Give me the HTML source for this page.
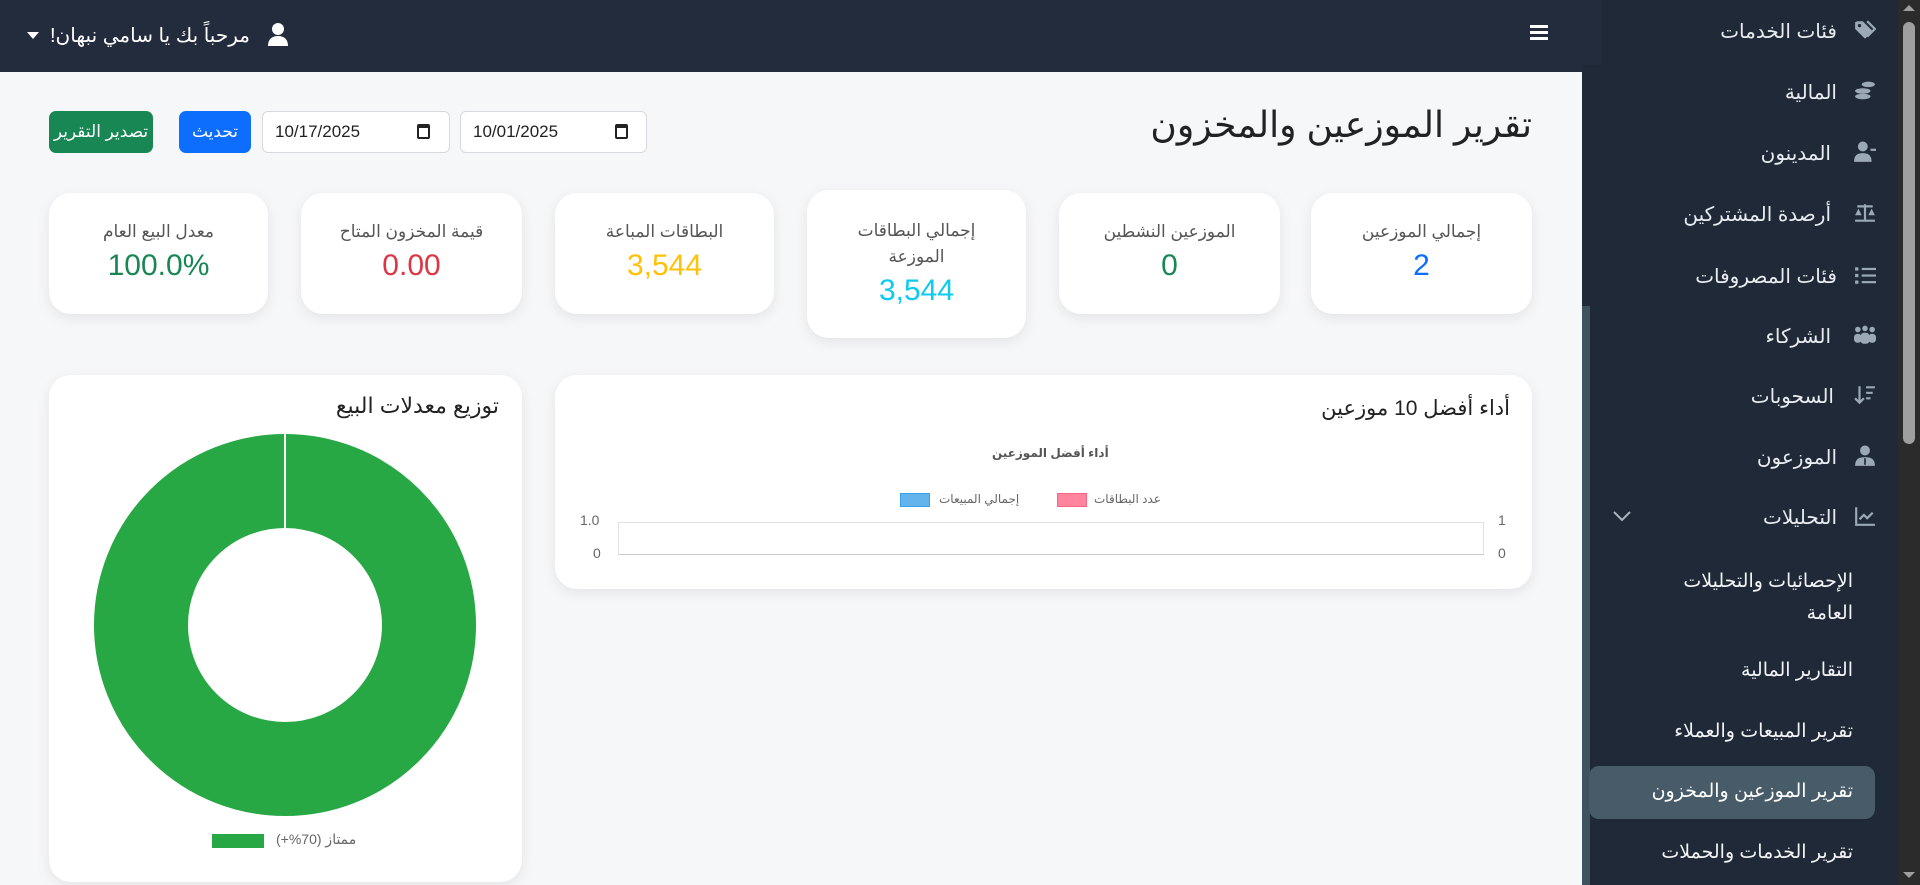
<!DOCTYPE html>
<html><head><meta charset="utf-8"><style>
*{box-sizing:border-box;margin:0;padding:0}
body{width:1920px;height:885px;overflow:hidden;background:#f6f7f9;font-family:"Liberation Sans","DejaVu Sans",sans-serif;position:relative}
.abs{position:absolute}
.hdr{left:0;top:0;width:1582px;height:72px;background:#222c3c}
.side{left:1582px;top:0;width:316px;height:885px;background:#1f2937}
.sb{left:1898px;top:0;width:22px;height:885px;background:#2b2b2b}
.card{position:absolute;background:#fff;border-radius:22px;box-shadow:0 4px 14px rgba(0,0,0,.08)}
.stat{text-align:center;direction:rtl}
.stat .l{color:#555;font-size:17px;line-height:26px}
.stat .v{font-size:30px;margin-top:4px}
.mi{position:absolute;right:83px;color:#e8ecf0;font-size:20px;direction:rtl;white-space:nowrap}
.ic{position:absolute;left:1854px;width:22px;height:22px}
.si{position:absolute;right:67px;color:#f2f4f6;font-size:19px;direction:rtl;text-align:right;white-space:nowrap;line-height:26px}
</style></head><body>
<div class="abs hdr"></div>
<div class="abs" style="left:1530px;top:25px;width:18px;height:3px;background:#fff;box-shadow:0 6px 0 #fff,0 12px 0 #fff"></div>
<div class="abs" style="left:50px;top:23px;color:#fff;font-size:20px;direction:rtl;white-space:nowrap">مرحباً بك يا سامي نبهان!</div>
<svg class="abs" style="left:268px;top:22px" width="20" height="24" viewBox="0 0 20 24"><circle cx="10" cy="7" r="6" fill="#fff"/><path d="M0 24c0-7 4-10 10-10s10 3 10 10z" fill="#fff"/></svg>
<div class="abs" style="left:27px;top:32px;border-left:6px solid transparent;border-right:6px solid transparent;border-top:7px solid #fff"></div>

<div class="abs" style="right:388px;top:104px;font-size:36px;color:#222;direction:rtl;white-space:nowrap">تقرير الموزعين والمخزون</div>

<div class="abs" style="left:49px;top:111px;width:104px;height:42px;background:#198754;border-radius:7px;color:#fff;font-size:17px;text-align:center;line-height:42px">تصدير التقرير</div>
<div class="abs" style="left:179px;top:111px;width:72px;height:42px;background:#0d6efd;border-radius:7px;color:#fff;font-size:17px;text-align:center;line-height:42px">تحديث</div>
<div class="abs" style="left:262px;top:111px;width:188px;height:42px;background:#fff;border:1px solid #d6d9dd;border-radius:6px;font-size:17px;line-height:40px;padding-left:12px;color:#222">10/17/2025</div>
<div class="abs" style="left:417px;top:124px;width:13px;height:15px;border:2px solid #222;border-top-width:4px;border-radius:2px"></div>
<div class="abs" style="left:460px;top:111px;width:187px;height:42px;background:#fff;border:1px solid #d6d9dd;border-radius:6px;font-size:17px;line-height:40px;padding-left:12px;color:#222">10/01/2025</div>
<div class="abs" style="left:615px;top:124px;width:13px;height:15px;border:2px solid #222;border-top-width:4px;border-radius:2px"></div>

<div class="card stat" style="left:49px;top:193px;width:219px;height:121px;padding-top:26px"><div class="l">معدل البيع العام</div><div class="v" style="color:#198754">100.0%</div></div>
<div class="card stat" style="left:301px;top:193px;width:221px;height:121px;padding-top:26px"><div class="l">قيمة المخزون المتاح</div><div class="v" style="color:#dc3545">0.00</div></div>
<div class="card stat" style="left:555px;top:193px;width:219px;height:121px;padding-top:26px"><div class="l">البطاقات المباعة</div><div class="v" style="color:#ffc107">3,544</div></div>
<div class="card stat" style="left:807px;top:190px;width:219px;height:148px;padding-top:28px"><div class="l" style="padding:0 40px">إجمالي البطاقات الموزعة</div><div class="v" style="color:#0dcaf0">3,544</div></div>
<div class="card stat" style="left:1059px;top:193px;width:221px;height:121px;padding-top:26px"><div class="l">الموزعين النشطين</div><div class="v" style="color:#198754">0</div></div>
<div class="card stat" style="left:1311px;top:193px;width:221px;height:121px;padding-top:26px"><div class="l">إجمالي الموزعين</div><div class="v" style="color:#0d6efd">2</div></div>

<div class="card" style="left:49px;top:375px;width:473px;height:507px"></div>
<div class="abs" style="right:1421px;top:393px;font-size:22px;color:#222;direction:rtl;white-space:nowrap">توزيع معدلات البيع</div>
<svg class="abs" style="left:94px;top:434px" width="382" height="382"><circle cx="191" cy="191" r="144" fill="none" stroke="#28a745" stroke-width="94"/><line x1="191" y1="0" x2="191" y2="95" stroke="#fff" stroke-width="2"/></svg>
<div class="abs" style="left:212px;top:834px;width:52px;height:14px;background:#28a745"></div>
<div class="abs" style="left:276px;top:831px;font-size:14px;color:#666;direction:rtl;white-space:nowrap;width:94px;text-align:left">ممتاز (70%+)</div>

<div class="card" style="left:555px;top:375px;width:977px;height:214px"></div>
<div class="abs" style="right:410px;top:396px;font-size:21px;color:#222;direction:rtl;white-space:nowrap">أداء أفضل 10 موزعين</div>
<div class="abs" style="left:992px;top:446px;font-size:12px;color:#555;font-weight:bold;direction:rtl;white-space:nowrap">أداء أفضل الموزعين</div>
<div class="abs" style="left:1057px;top:493px;width:30px;height:14px;background:#ff859f;border:1px solid #ff6384"></div>
<div class="abs" style="left:1094px;top:492px;font-size:12px;color:#666;direction:rtl;white-space:nowrap">عدد البطاقات</div>
<div class="abs" style="left:900px;top:493px;width:30px;height:14px;background:#63b3ed;border:1px solid #36a2eb"></div>
<div class="abs" style="left:939px;top:492px;font-size:12px;color:#666;direction:rtl;white-space:nowrap">إجمالي المبيعات</div>
<div class="abs" style="left:618px;top:522px;width:866px;height:33px;border:1px solid #e2e2e2;border-bottom-color:#ccc"></div>
<div class="abs" style="left:580px;top:512px;font-size:14px;color:#666">1.0</div>
<div class="abs" style="left:593px;top:545px;font-size:14px;color:#666">0</div>
<div class="abs" style="left:1498px;top:512px;font-size:14px;color:#666">1</div>
<div class="abs" style="left:1498px;top:545px;font-size:14px;color:#666">0</div>

<div class="abs side"></div>
<div class="abs" style="left:1582px;top:0;width:20px;height:65px;background:#222c3c"></div>
<div class="abs" style="left:1582px;top:306px;width:8px;height:579px;background:#3f5260"></div>
<div class="mi" style="top:19px">فئات الخدمات</div>
<div class="mi" style="top:80px">المالية</div>
<div class="mi" style="top:141px;right:89px">المدينون</div>
<div class="mi" style="top:202px;right:89px">أرصدة المشتركين</div>
<div class="mi" style="top:264px">فئات المصروفات</div>
<div class="mi" style="top:324px;right:89px">الشركاء</div>
<div class="mi" style="top:384px;right:86px">السحوبات</div>
<div class="mi" style="top:445px">الموزعون</div>
<div class="mi" style="top:505px">التحليلات</div>
<svg class="abs" style="left:1612px;top:510px" width="20" height="12"><path d="M2 2l8 8 8-8" stroke="#aab4bd" stroke-width="2" fill="none"/></svg>
<svg class="ic" style="top:19px" viewBox="0 0 20 20"><path d="M1 3v6l9 9 7-7-9-9H3z" fill="#9aa9b5"/><circle cx="5" cy="6" r="1.5" fill="#1f2937"/><path d="M12 2l7 7-7 7" stroke="#9aa9b5" stroke-width="2" fill="none"/></svg>
<svg class="ic" style="top:80px" viewBox="0 0 20 20"><ellipse cx="13" cy="4" rx="6" ry="2.5" fill="#9aa9b5"/><ellipse cx="8" cy="10" rx="7" ry="2.5" fill="#9aa9b5"/><ellipse cx="8" cy="15" rx="7" ry="2.5" fill="#9aa9b5"/></svg>
<svg class="ic" style="top:141px" viewBox="0 0 20 20"><circle cx="8" cy="5" r="4.5" fill="#9aa9b5"/><path d="M0 19c0-6 3-8 8-8s8 2 8 8z" fill="#9aa9b5"/><rect x="15" y="7" width="5" height="2" fill="#9aa9b5"/></svg>
<svg class="ic" style="top:202px" viewBox="0 0 20 20"><path d="M10 2v15M3 4h14M1 17h18" stroke="#9aa9b5" stroke-width="2"/><path d="M1 12l3-6 3 6zM13 12l3-6 3 6z" fill="#9aa9b5"/></svg>
<svg class="ic" style="top:264px" viewBox="0 0 20 20"><rect x="1" y="3" width="3" height="3" fill="#9aa9b5"/><rect x="1" y="9" width="3" height="3" fill="#9aa9b5"/><rect x="1" y="15" width="3" height="3" fill="#9aa9b5"/><rect x="7" y="3.5" width="13" height="2" fill="#9aa9b5"/><rect x="7" y="9.5" width="13" height="2" fill="#9aa9b5"/><rect x="7" y="15.5" width="13" height="2" fill="#9aa9b5"/></svg>
<svg class="ic" style="top:324px" viewBox="0 0 20 20"><circle cx="3.5" cy="5" r="2.5" fill="#9aa9b5"/><circle cx="10" cy="4" r="2.5" fill="#9aa9b5"/><circle cx="16.5" cy="5" r="2.5" fill="#9aa9b5"/><rect x="0" y="9" width="7" height="8" rx="3" fill="#9aa9b5"/><rect x="13" y="9" width="7" height="8" rx="3" fill="#9aa9b5"/><rect x="6" y="8" width="8" height="10" rx="3" fill="#9aa9b5"/></svg>
<svg class="ic" style="top:384px" viewBox="0 0 20 20"><path d="M5 2v15M1 13l4 4 4-4" stroke="#9aa9b5" stroke-width="2" fill="none"/><path d="M11 3h8M11 8h6M11 13h4" stroke="#9aa9b5" stroke-width="2"/></svg>
<svg class="ic" style="top:445px" viewBox="0 0 20 20"><circle cx="10" cy="5" r="4.5" fill="#9aa9b5"/><path d="M1 19c0-6 3-8 9-8s9 2 9 8z" fill="#9aa9b5"/><path d="M10 12v6" stroke="#1f2937" stroke-width="1.5"/></svg>
<svg class="ic" style="top:505px" viewBox="0 0 20 20"><path d="M2 2v16h17" stroke="#9aa9b5" stroke-width="2" fill="none"/><path d="M5 13l4-4 3 3 5-5" stroke="#9aa9b5" stroke-width="2" fill="none"/></svg>
<div class="si" style="top:566px;line-height:32px">الإحصائيات والتحليلات<br>العامة</div>
<div class="si" style="top:658px">التقارير المالية</div>
<div class="si" style="top:719px">تقرير المبيعات والعملاء</div>
<div class="abs" style="left:1589px;top:766px;width:286px;height:53px;background:#475b68;border-radius:10px"></div>
<div class="si" style="top:779px;color:#fff">تقرير الموزعين والمخزون</div>
<div class="si" style="top:840px">تقرير الخدمات والحملات</div>

<div class="abs sb"></div>
<div class="abs" style="left:1903px;top:22px;width:12px;height:422px;background:#9f9f9f;border-radius:6px"></div>
<div class="abs" style="left:1903px;top:5px;border-left:6px solid transparent;border-right:6px solid transparent;border-bottom:6px solid #9f9f9f"></div>
<div class="abs" style="left:1903px;top:872px;border-left:6px solid transparent;border-right:6px solid transparent;border-top:6px solid #9f9f9f"></div>
</body></html>
